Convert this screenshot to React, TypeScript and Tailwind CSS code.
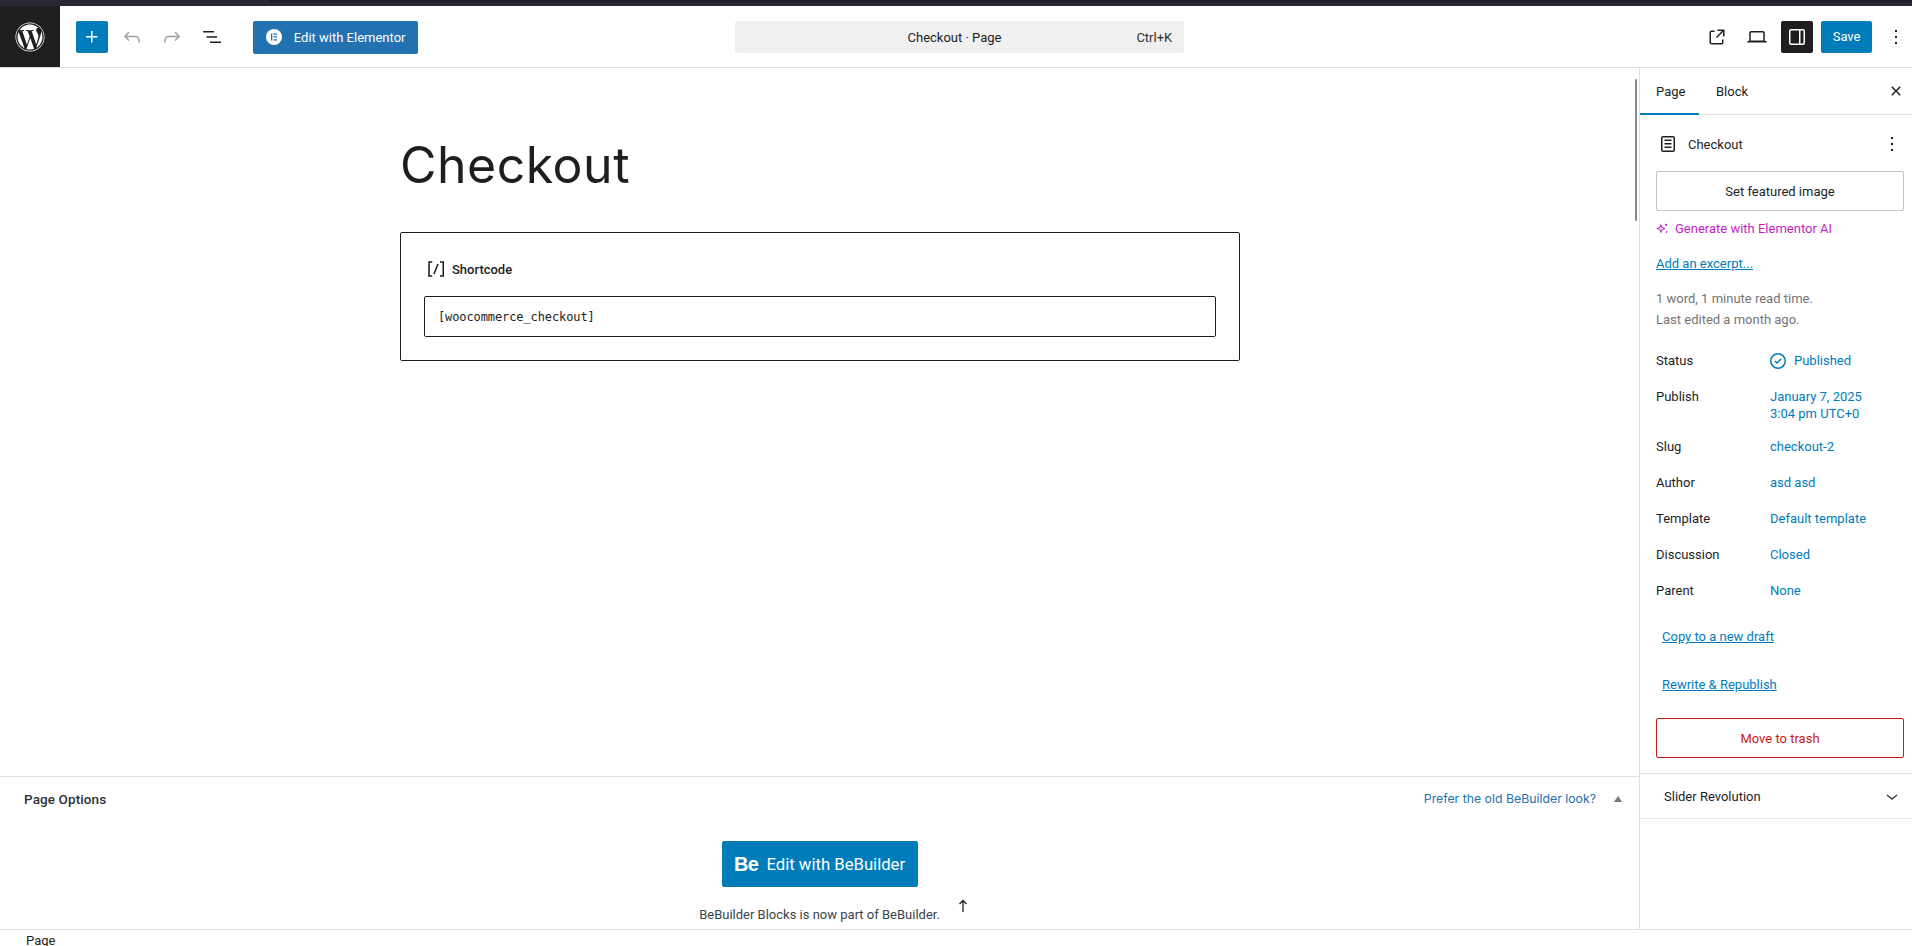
import React from 'react';
import { FaWordpress } from 'react-icons/fa';

const linkBlue = 'text-[#007cba]';

// gutenberg style icons, 24 box
function Icon({ d, className }: { d: string; className?: string }) {
  return (
    <svg viewBox="0 0 24 24" className={className} fill="currentColor" aria-hidden="true">
      <path d={d} />
    </svg>
  );
}

const icons = {
  plus: 'M11 12.5V17.5H12.5V12.5H17.5V11H12.5V6H11V11H6V12.5H11Z',
  undo: 'M18.3 11.7c-.6-.6-1.4-.9-2.3-.9H6.7l2.9-3.3-1.1-1-4.5 5L8.5 16l1-1-2.7-2.7H16c.5 0 .9.2 1.3.5 1 1 1 3.4 1 4.5v.3h1.5v-.2c0-1.5 0-4.3-1.5-5.7z',
  redo: 'M15.6 6.5l-1.1 1 2.9 3.3H8c-.9 0-1.7.3-2.3.9-1.4 1.5-1.4 4.2-1.4 5.6v.2h1.5v-.3c0-1.1 0-3.5 1-4.5.3-.3.7-.5 1.3-.5h9.2L14.5 15l1.1 1.1 4.6-4.6-4.6-5z',
  listView: 'M3 6h11v1.5H3V6Zm3.5 5.25H17v1.5H6.5v-1.5ZM21 16.5H10V18h11v-1.5Z',
  external: 'M19.5 4.5h-7V6h4.44l-5.97 5.97 1.06 1.06L18 7.06v4.44h1.5v-7Zm-13 1a2 2 0 0 0-2 2v10a2 2 0 0 0 2 2h10a2 2 0 0 0 2-2v-3H17v3a.5.5 0 0 1-.5.5h-10a.5.5 0 0 1-.5-.5v-10a.5.5 0 0 1 .5-.5h3V5.5h-3Z',
  desktop: 'M20.5 16h-.7V8c0-1.1-.9-2-2-2H6.2c-1.1 0-2 .9-2 2v8h-.7c-.8 0-1.5.7-1.5 1.5h20c0-.8-.7-1.5-1.5-1.5zM5.7 8c0-.3.2-.5.5-.5h11.6c.3 0 .5.2.5.5v7.6H5.7V8z',
  sidebar: 'M18 4H6c-1.1 0-2 .9-2 2v12c0 1.1.9 2 2 2h12c1.1 0 2-.9 2-2V6c0-1.1-.9-2-2-2zm-4 14.5H6c-.3 0-.5-.2-.5-.5V6c0-.3.2-.5.5-.5h8v13zm4.5-.5c0 .3-.2.5-.5.5h-2.5v-13H18c.3 0 .5.2.5.5v12z',
  dots: 'M13 19h-2v-2h2v2zm0-6h-2v-2h2v2zm0-6h-2V5h2v2z',
  closeSmall: 'M12 13.06l3.712 3.713 1.061-1.06L13.061 12l3.712-3.712-1.06-1.06L12 10.938 8.288 7.227l-1.061 1.06L10.939 12l-3.712 3.712 1.06 1.061L12 13.061z',
  page: 'M15.5 7.5h-7V9h7V7.5Zm-7 3.5h7v1.5h-7V11Zm7 3.5h-7V16h7v-1.5Z M17 4H7a2 2 0 0 0-2 2v12a2 2 0 0 0 2 2h10a2 2 0 0 0 2-2V6a2 2 0 0 0-2-2ZM7 5.5h10a.5.5 0 0 1 .5.5v12a.5.5 0 0 1-.5.5H7a.5.5 0 0 1-.5-.5V6a.5.5 0 0 1 .5-.5Z',
  chevron: 'M17.5 11.6L12 16l-5.5-4.4.9-1.2L12 14l4.5-3.6 1 1.2z',
  published: 'M12 18.5a6.5 6.5 0 1 1 0-13 6.5 6.5 0 0 1 0 13ZM4 12a8 8 0 1 0 16 0 8 8 0 0 0-16 0Zm11.53-1.47-1.06-1.06L11 12.94l-1.47-1.47-1.06 1.06L11 15.06l4.53-4.53Z',
  shortcode: 'M16 4.2v1.5h2.5v12.5H16v1.5h4V4.2h-4zM4.2 19.8h4v-1.5H5.8V5.8h2.5V4.2h-4l-.1 15.6zm5.1-3.1l1.4.6 4-10-1.4-.6-4 10z',
};

function IconButton({ d, className }: { d: string; className?: string }) {
  return (
    <button className={`flex h-8 w-8 items-center justify-center ${className ?? ''}`}>
      <Icon d={d} className="h-6 w-6" />
    </button>
  );
}

function MetaRow({ label, children, top }: { label: string; children: React.ReactNode; top: string }) {
  return (
    <div className={`flex items-start ${top}`}>
      <span className="w-[114px] leading-[18px]">{label}</span>
      <div className={`leading-[17px] ${linkBlue}`}>{children}</div>
    </div>
  );
}

function TopBar() {
  return (
    <header className="flex h-[62px] shrink-0 items-center border-b border-[#e0e0e0] bg-white">
      <div className="flex h-[61px] w-[60px] items-center justify-center bg-[#1e1e1e] text-white">
        <FaWordpress className="h-[30px] w-[30px]" />
      </div>
      <button className="ml-[16px] flex h-8 w-8 items-center justify-center rounded-[2px] bg-[#007cba] text-white">
        <Icon d={icons.plus} className="h-6 w-6" />
      </button>
      <IconButton d={icons.undo} className="ml-[8px] text-[#a0a0a0]" />
      <IconButton d={icons.redo} className="ml-[8px] text-[#a0a0a0]" />
      <IconButton d={icons.listView} className="ml-[8px] text-[#1e1e1e]" />
      <button className="ml-[25px] mt-[1px] flex h-[33px] w-[165px] items-center rounded-[2px] bg-[#2271b1] pl-[13px] text-[13px] text-white">
        <span className="flex h-4 w-4 items-center justify-center rounded-full bg-white">
          <svg viewBox="0 0 16 16" className="h-4 w-4">
            <path d="M5 4.5h1.3v7H5zM7.5 4.5H11v1.3H7.5zM7.5 7.3H11v1.3H7.5zM7.5 10.2H11v1.3H7.5z" fill="#2271b1" />
          </svg>
        </span>
        <span className="ml-[12px] mt-[1px]">Edit with Elementor</span>
      </button>
      <div className="ml-[317px] flex h-8 w-[450px] items-center rounded-[2px] bg-[#f0f0f0] pr-[12px] pt-[2px] text-[13px] text-[#1e1e1e]">
        <span className="flex-1 pl-[38px] text-center">Checkout · Page</span>
        <span className="text-[#2f2f2f]">Ctrl+K</span>
      </div>
      <IconButton d={icons.external} className="ml-[517px] text-[#1e1e1e]" />
      <IconButton d={icons.desktop} className="ml-[8px] text-[#1e1e1e]" />
      <IconButton d={icons.sidebar} className="ml-[8px] rounded-[2px] bg-[#1e1e1e] text-white" />
      <button className="ml-[8px] h-8 w-[51px] rounded-[2px] bg-[#007cba] pt-[1px] text-[13px] text-white">Save</button>
      <IconButton d={icons.dots} className="ml-[8px] text-[#1e1e1e]" />
    </header>
  );
}

function Canvas() {
  return (
    <div className="relative min-h-0 flex-1 overflow-hidden bg-white">
      <div className="ml-[400px] w-[840px]">
        <h1 className="mt-[64px] font-['Inter'] text-[50px] font-normal leading-[66px] tracking-[0.5px] text-[#1e1e1e]">Checkout</h1>
        <div className="mt-[34px] h-[129px] rounded-[2px] border border-[#1e1e1e] px-[23px] pt-[23px]">
          <div className="flex h-[26px] items-center text-[#1e1e1e]">
            <Icon d={icons.shortcode} className="h-[24px] w-[24px]" />
            <span className="ml-[4px] mt-[1px] text-[13px] font-medium">Shortcode</span>
          </div>
          <div className="mt-[14px] flex h-[41px] items-center rounded-[2px] border border-[#1e1e1e] pl-[13px] font-['DejaVu_Sans_Mono'] text-[12px] tracking-[-0.1px] text-[#1e1e1e]">
            [woocommerce_checkout]
          </div>
        </div>
      </div>
      {/* scrollbar */}
      <div className="absolute right-[2px] top-[11px] h-[142px] w-[2px] rounded-full bg-[#8a8a8a]" />
    </div>
  );
}

function PageOptions() {
  return (
    <section className="h-[153px] shrink-0 overflow-hidden border-t border-[#e0e0e0] bg-white">
      <div className="flex h-[44px] items-center pl-[24px] pr-[17px]">
        <span className="text-[13.5px] font-medium tracking-[0.1px] text-[#2c3338]">Page Options</span>
        <a className="ml-auto font-['Inter'] text-[12.3px] text-[#2271b1]">Prefer the old BeBuilder look?</a>
        <span className="ml-[18px] h-0 w-0 border-x-[4px] border-b-[6px] border-x-transparent border-b-[#72777c]" />
      </div>
      <div className="flex flex-col items-center pt-[20px]">
        <button className="flex h-[46px] w-[196px] items-center justify-center rounded-[2px] bg-[#007cba] text-white">
          <span className="font-['Liberation_Sans'] text-[20px] font-bold leading-none tracking-[-0.5px]">Be</span>
          <span className="ml-[8px] mt-[2px] text-[16.7px]">Edit with BeBuilder</span>
        </button>
        <div className="relative mt-[19px] text-[13px] leading-[18px] text-[#3c434a]">
          BeBuilder Blocks is now part of BeBuilder.
          <svg viewBox="0 0 12 14" className="absolute right-[-29px] top-[-7px] h-[14px] w-[12px]" fill="none" stroke="#1d2327" strokeWidth="1.3">
            <path d="M6 13V1.5M2.5 5l3.5-3.5L9.5 5" />
          </svg>
        </div>
      </div>
    </section>
  );
}

function Sidebar() {
  return (
    <aside className="flex w-[273px] shrink-0 flex-col border-l border-[#e0e0e0] bg-white text-[13px] text-[#1e1e1e]">
      <div className="flex h-[47px] shrink-0 items-center border-b border-[#e0e0e0]">
        <div className="flex h-[47px] w-[59px] items-center border-b-2 border-[#007cba] pl-[16px] pt-[4px]">Page</div>
        <div className="ml-[17px] pt-[2px]">Block</div>
        <Icon d={icons.closeSmall} className="ml-auto mr-[4px] h-6 w-6" />
      </div>
      <div className="flex h-[659px] flex-col border-b border-[#e0e0e0] pl-[16px] pr-[8px]">
        <div className="mt-[17px] flex h-[24px] items-center">
          <Icon d={icons.page} className="h-[24px] w-[24px]" />
          <span className="ml-[8px] mt-[1px]">Checkout</span>
          <Icon d={icons.dots} className="ml-auto h-6 w-6" />
        </div>
        <button className="mt-[15px] h-[40px] w-[248px] shrink-0 rounded-[2px] border border-[#c4c4c4] pt-[2px]">Set featured image</button>
        <div className="mt-[8px] flex h-[18px] items-center pt-[1px] text-[#c31fbf]">
          <svg viewBox="0 0 16 16" className="h-[13px] w-[13px]" fill="none" stroke="currentColor" strokeWidth="1.3">
            <path d="M6 3.5l1.3 3.2 3.2 1.3-3.2 1.3L6 12.5 4.7 9.3 1.5 8l3.2-1.3z" />
            <path d="M12.5 2v3M11 3.5h3M13 11v2.5" />
          </svg>
          <span className="ml-[6px]">Generate with Elementor AI</span>
        </div>
        <a className={`mt-[18px] leading-[18px] underline ${linkBlue}`}>Add an excerpt...</a>
        <p className="mt-[15px] leading-[21px] text-[#757575]">1 word, 1 minute read time.<br />Last edited a month ago.</p>
        <div className="mt-[22px]">
          <div className="flex h-[18px] items-center">
            <span className="w-[114px]">Status</span>
            <div className={`flex items-center ${linkBlue}`}>
              <Icon d={icons.published} className="-ml-[4px] h-6 w-6" />
              <span className="ml-[4px]">Published</span>
            </div>
          </div>
          <MetaRow label="Publish" top="mt-[18px]">January 7, 2025<br />3:04 pm UTC+0</MetaRow>
          <MetaRow label="Slug" top="mt-[16px]">checkout-2</MetaRow>
          <MetaRow label="Author" top="mt-[18px]">asd asd</MetaRow>
          <MetaRow label="Template" top="mt-[18px]">Default template</MetaRow>
          <MetaRow label="Discussion" top="mt-[18px]">Closed</MetaRow>
          <MetaRow label="Parent" top="mt-[18px]">None</MetaRow>
        </div>
        <a className={`ml-[6px] mt-[28px] leading-[18px] underline ${linkBlue}`}>Copy to a new draft</a>
        <a className={`ml-[6px] mt-[30px] leading-[18px] underline ${linkBlue}`}>Rewrite &amp; Republish</a>
        <button className="mt-[24px] h-[40px] w-[248px] shrink-0 rounded-[2px] border border-[#cc1818] pt-[1px] text-[#cc1818]">Move to trash</button>
      </div>
      <div className="flex h-[45px] shrink-0 items-center border-b border-[#e9e9e9] pl-[24px] pr-[8px]">
        <span className="mt-[1px]">Slider Revolution</span>
        <Icon d={icons.chevron} className="ml-auto h-6 w-6 text-[#444]" />
      </div>
      <div className="flex-1" />
    </aside>
  );
}

export default function App() {
  return (
    <div className="flex h-[946px] w-[1912px] flex-col overflow-hidden bg-white font-['Roboto','Open_Sans',sans-serif]">
      <div className="flex h-[6px] shrink-0 bg-[#282833]">
        <div className="ml-[270px] h-[2px] flex-1 bg-[#1c1c24]" />
      </div>
      <TopBar />
      <div className="flex h-[862px] min-h-0">
        <div className="flex min-w-0 flex-1 flex-col">
          <Canvas />
          <PageOptions />
        </div>
        <Sidebar />
      </div>
      <footer className="h-[17px] shrink-0 overflow-hidden border-t border-[#e0e0e0] bg-white pl-[26px] text-[13px] leading-[22px] text-[#1e1e1e]">Page</footer>
    </div>
  );
}
